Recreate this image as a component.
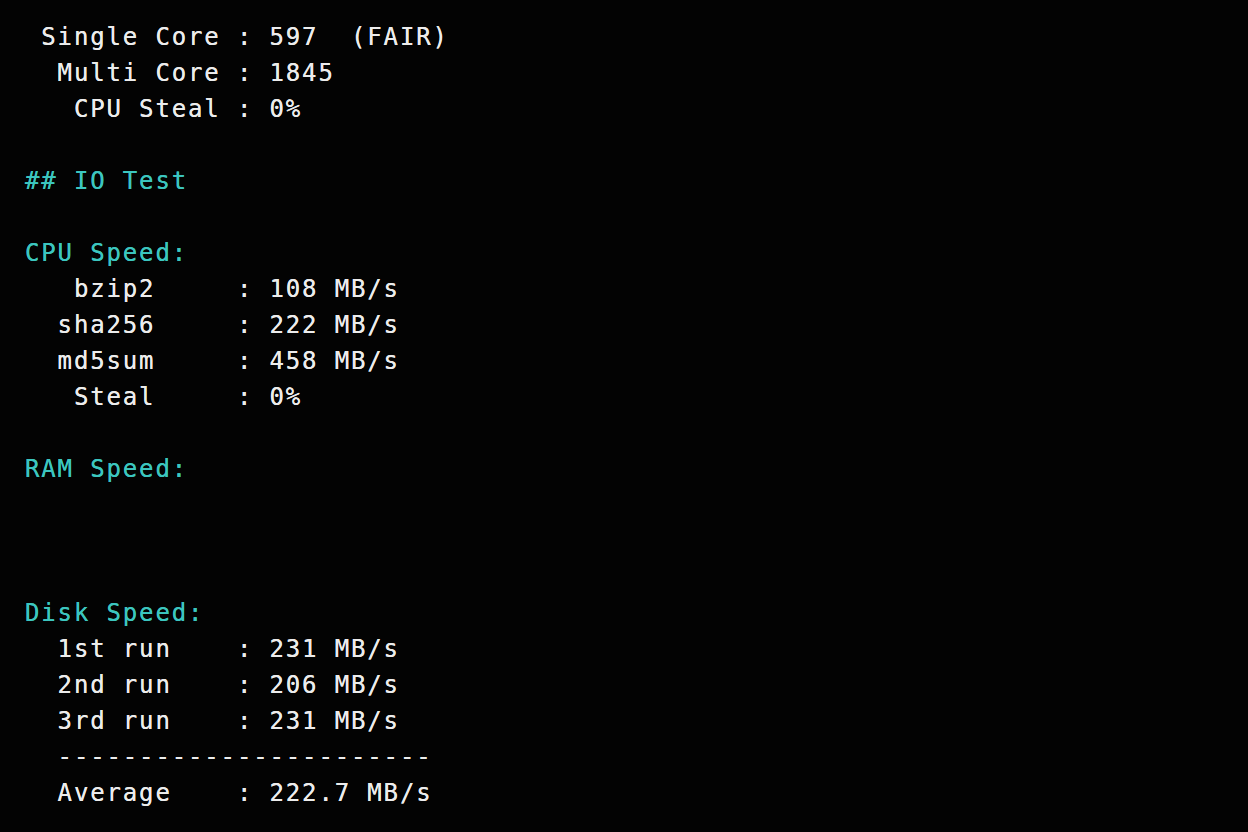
import React from "react";

type Line = { t: string; c?: boolean };

const lines: Line[] = [
  { t: " Single Core : 597  (FAIR)" },
  { t: "  Multi Core : 1845" },
  { t: "   CPU Steal : 0%" },
  { t: "" },
  { t: "## IO Test", c: true },
  { t: "" },
  { t: "CPU Speed:", c: true },
  { t: "   bzip2     : 108 MB/s" },
  { t: "  sha256     : 222 MB/s" },
  { t: "  md5sum     : 458 MB/s" },
  { t: "   Steal     : 0%" },
  { t: "" },
  { t: "RAM Speed:", c: true },
  { t: "" },
  { t: "" },
  { t: "" },
  { t: "Disk Speed:", c: true },
  { t: "  1st run    : 231 MB/s" },
  { t: "  2nd run    : 206 MB/s" },
  { t: "  3rd run    : 231 MB/s" },
  { t: "  -----------------------" },
  { t: "  Average    : 222.7 MB/s" },
];

export default function App() {
  return (
    <div className="w-[1248px] h-[832px] bg-[#030303] overflow-hidden pt-[19px] pl-[25px]">
      <div
        className="text-[24px] leading-[36px] tracking-[1.85px] [text-shadow:0_0_0.4px_currentColor]"
        style={{ fontFamily: '"DejaVu Sans Mono", "Liberation Mono", monospace' }}
      >
        {lines.map((l, i) => (
          <div
            key={i}
            className={`whitespace-pre h-[36px] ${l.c ? "text-[#3cc6bf]" : "text-[#ececec]"}`}
          >
            {l.t || " "}
          </div>
        ))}
      </div>
    </div>
  );
}
